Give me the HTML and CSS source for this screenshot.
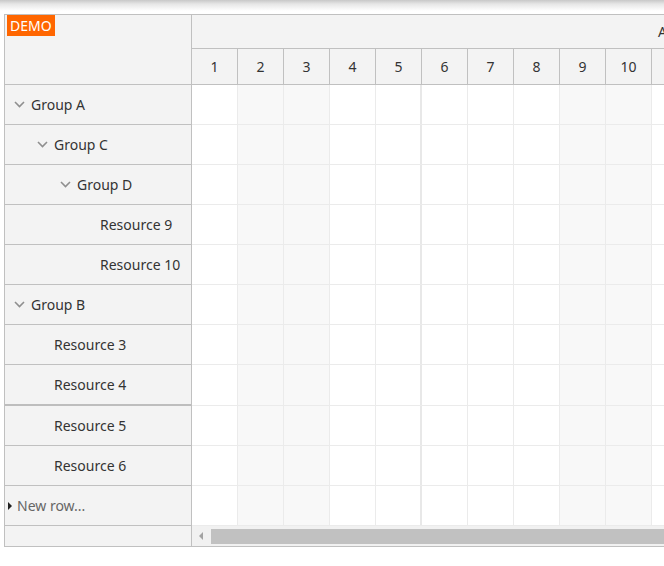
FILE: index.html
```html
<!DOCTYPE html>
<html lang="en">
<head>
    <meta charset="UTF-8">
    <title>Scheduler</title>
    <link rel="stylesheet" href="styles.css">
</head>
<body>
    <div class="topbar"></div>
    <div class="scheduler">
        <div class="rows-pane">
            <div class="corner"><span class="demo">DEMO</span></div>
            <div class="row lvl0"><span class="toggle"><svg width="11" height="7" viewBox="0 0 11 7"><polyline points="1,1 5.5,5.5 10,1" /></svg></span>Group A</div>
            <div class="row lvl1"><span class="toggle"><svg width="11" height="7" viewBox="0 0 11 7"><polyline points="1,1 5.5,5.5 10,1" /></svg></span>Group C</div>
            <div class="row lvl2"><span class="toggle"><svg width="11" height="7" viewBox="0 0 11 7"><polyline points="1,1 5.5,5.5 10,1" /></svg></span>Group D</div>
            <div class="row lvl3"><span class="toggle"></span>Resource 9</div>
            <div class="row lvl3"><span class="toggle"></span>Resource 10</div>
            <div class="row lvl0"><span class="toggle"><svg width="11" height="7" viewBox="0 0 11 7"><polyline points="1,1 5.5,5.5 10,1" /></svg></span>Group B</div>
            <div class="row lvl1"><span class="toggle"></span>Resource 3</div>
            <div class="row lvl1 split"><span class="toggle"></span>Resource 4</div>
            <div class="row lvl1"><span class="toggle"></span>Resource 5</div>
            <div class="row lvl1"><span class="toggle"></span>Resource 6</div>
            <div class="row new-row"><span class="arrow"></span>New row...</div>
            <div class="pane-foot"></div>
        </div>
        <div class="grid-pane">
            <div class="timeheader">
                <div class="month">April 2024</div>
                <div class="days" id="days"></div>
            </div>
            <div class="cells" id="cells"></div>
            <div class="hscroll">
                <span class="scroll-left"></span>
                <span class="thumb"></span>
            </div>
        </div>
    </div>

    <script>
        const daysEl = document.getElementById('days');
        const cellsEl = document.getElementById('cells');
        const dayCount = 11;
        const weekend = [2, 3, 9, 10];
        // rows with the thicker separator below them
        const rowCount = 11;
        const splitRow = 7;

        for (let d = 1; d <= dayCount; d++) {
            const day = document.createElement('div');
            day.className = 'day';
            day.textContent = d;
            daysEl.appendChild(day);
        }

        for (let r = 0; r < rowCount; r++) {
            const row = document.createElement('div');
            row.className = 'cell-row' + (r === splitRow ? ' split' : '');
            for (let d = 1; d <= dayCount; d++) {
                const cell = document.createElement('div');
                cell.className = 'cell';
                if (weekend.includes(d)) cell.classList.add('weekend');
                if (d === 5) cell.classList.add('week-end');
                row.appendChild(cell);
            }
            cellsEl.appendChild(row);
        }
    </script>
</body>
</html>
```

FILE: styles.css
```css
* {
    margin: 0;
    padding: 0;
    box-sizing: border-box;
}
body {
    font-family: 'Noto Sans', 'Open Sans', sans-serif;
    font-size: 14px;
    color: #333;
    background: #fff;
    overflow: hidden;
    width: 664px;
    height: 566px;
}
.topbar {
    height: 14px;
    background: linear-gradient(to bottom, #c8c8c8, #e6e6e6 4px, #fff 11px);
}
.scheduler {
    display: flex;
    margin-left: 4px;
    width: 720px;
    border: 1px solid #c0c0c0;
}
.rows-pane {
    width: 187px;
    flex: none;
    background: #f3f3f3;
    border-right: 1px solid #c0c0c0;
}
.corner {
    height: 70px;
    border-bottom: 1px solid #c0c0c0;
    padding: 0 0 0 2px;
}
.demo {
    display: inline-block;
    background: #ff6600;
    color: #fff;
    font-size: 14px;
    line-height: 21px;
    padding: 0 3px;
}
.row {
    display: flex;
    align-items: center;
    height: 40px;
    border-bottom: 1px solid #c0c0c0;
    white-space: nowrap;
}
.row.split {
    height: 41px;
    border-bottom: 2px solid #bdbdbd;
}
.lvl0 { padding-left: 3px; }
.lvl1 { padding-left: 26px; }
.lvl2 { padding-left: 49px; }
.lvl3 { padding-left: 72px; }
.toggle {
    width: 23px;
    height: 10px;
    flex: none;
    display: flex;
    align-items: center;
    justify-content: center;
}
.toggle polyline {
    fill: none;
    stroke: #8f8f8f;
    stroke-width: 1.6;
}
.new-row {
    padding-left: 3px;
    color: #666;
}
.arrow {
    width: 0;
    height: 0;
    border-top: 4px solid transparent;
    border-bottom: 4px solid transparent;
    border-left: 4px solid #222;
    margin-right: 5px;
}
.pane-foot {
    height: 20px;
}
.grid-pane {
    flex: 1;
    overflow: hidden;
}
.timeheader {
    background: #f3f3f3;
    border-bottom: 1px solid #c0c0c0;
}
.month {
    height: 34px;
    line-height: 33px;
    border-bottom: 1px solid #c0c0c0;
    padding-left: 466px;
    white-space: nowrap;
}
.days {
    display: flex;
    height: 35px;
}
.day {
    width: 46px;
    flex: none;
    border-right: 1px solid #c0c0c0;
    text-align: center;
    line-height: 35px;
}
.cell-row {
    display: flex;
    height: 40px;
    border-bottom: 1px solid #ebebeb;
}
.cell-row.split {
    height: 41px;
}
.cell {
    width: 46px;
    flex: none;
    border-right: 1px solid #ebebeb;
    background: #fff;
}
.cell.weekend {
    background: #f8f8f8;
}
.cell.week-end {
    border-right: 2px solid #e8e8e8;
}
.hscroll {
    display: flex;
    align-items: center;
    height: 20px;
    background: #f1f1f1;
}
.scroll-left {
    width: 0;
    height: 0;
    border-top: 4px solid transparent;
    border-bottom: 4px solid transparent;
    border-right: 4px solid #a3a3a3;
    margin: 0 8px 0 7px;
}
.thumb {
    flex: 1;
    height: 15px;
    background: #c1c1c1;
}
```
